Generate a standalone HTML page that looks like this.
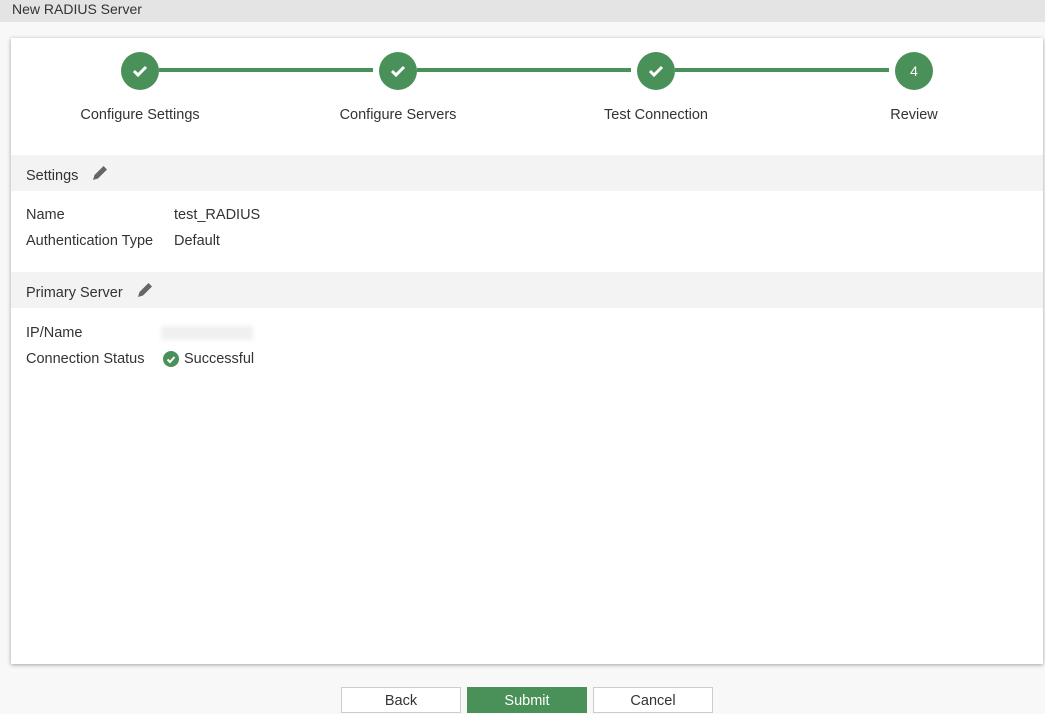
<!DOCTYPE html>
<html><head><style>
body{margin:0;width:1045px;height:713px;background:#f8f8f8;font-family:"Liberation Sans",sans-serif;font-size:14px;color:#333;position:relative;overflow:hidden}
.hdr{position:absolute;left:0;top:0;width:1045px;height:22px;background:#e4e4e4}
.hdr span{position:absolute;left:12px;top:1px;font-size:14px;color:#333}
.card{position:absolute;left:11px;top:38px;width:1032px;height:626px;background:#fff;box-shadow:0 1px 4px rgba(0,0,0,.35)}
.circ{position:absolute;width:38px;height:38px;border-radius:50%;background:#4a9159;top:14px;color:#fff;text-align:center;line-height:38px;font-size:14px}
.line{position:absolute;top:30px;height:4px;background:#4a9159}
.lbl{position:absolute;top:69px;width:200px;text-align:center;font-size:14.5px}
.sec{position:absolute;left:0;width:1032px;height:36px;background:#f3f3f3}
.sec span{position:absolute;left:15px;top:13px;font-size:14.5px}
.t{position:absolute;font-size:14.5px}
.btn{position:absolute;top:687px;width:120px;height:26px;border:1px solid #ccc;background:#fff;text-align:center;line-height:26px;font-size:14.5px;box-sizing:border-box}
</style></head><body>
<div class="hdr"><span>New RADIUS Server</span></div>
<div class="card">
<div class="line" style="left:148px;width:214px"></div>
<div class="line" style="left:406px;width:214px"></div>
<div class="line" style="left:664px;width:214px"></div>
<div class="circ" style="left:110px"><svg width="38" height="38"><path d="M13 19l4 4 8-8" stroke="#fff" stroke-width="3" fill="none"/></svg></div>
<div class="circ" style="left:368px"><svg width="38" height="38"><path d="M13 19l4 4 8-8" stroke="#fff" stroke-width="3" fill="none"/></svg></div>
<div class="circ" style="left:626px"><svg width="38" height="38"><path d="M13 19l4 4 8-8" stroke="#fff" stroke-width="3" fill="none"/></svg></div>
<div class="circ" style="left:884px">4</div>
<div class="lbl" style="left:29px">Configure Settings</div>
<div class="lbl" style="left:287px">Configure Servers</div>
<div class="lbl" style="left:545px">Test Connection</div>
<div class="lbl" style="left:803px">Review</div>
<div class="sec" style="top:117px"><span>Settings</span><svg style="position:absolute;left:80px;top:9px" width="18" height="18"><path d="M2 16l1.5-5 9-9 3.5 3.5-9 9z" fill="#666"/></svg></div>
<div class="t" style="left:15px;top:169px">Name</div><div class="t" style="left:163px;top:169px">test_RADIUS</div>
<div class="t" style="left:15px;top:195px">Authentication Type</div><div class="t" style="left:163px;top:195px">Default</div>
<div class="sec" style="top:234px"><span>Primary Server</span><svg style="position:absolute;left:125px;top:9px" width="18" height="18"><path d="M2 16l1.5-5 9-9 3.5 3.5-9 9z" fill="#666"/></svg></div>
<div class="t" style="left:15px;top:287px">IP/Name</div><div style="position:absolute;left:150px;top:288px;width:92px;height:14px;background:#f0f0f0;filter:blur(2px)"></div>
<div class="t" style="left:15px;top:313px">Connection Status</div>
<svg style="position:absolute;left:152px;top:313px" width="16" height="16"><circle cx="8" cy="8" r="8" fill="#4a9159"/><path d="M4.5 8.5l2.5 2.5 4.5-5" stroke="#fff" stroke-width="2" fill="none"/></svg>
<div class="t" style="left:173px;top:313px">Successful</div>
</div>
<div class="btn" style="left:341px">Back</div>
<div class="btn" style="left:467px;background:#4a9159;border-color:#4a9159;color:#fff">Submit</div>
<div class="btn" style="left:593px">Cancel</div>
</body></html>
